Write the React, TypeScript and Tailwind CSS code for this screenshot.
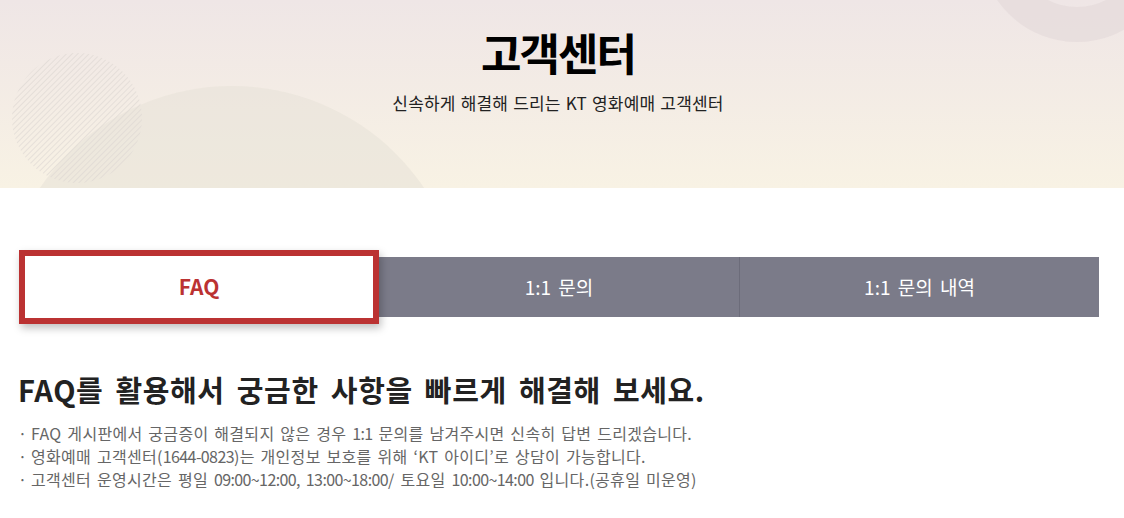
import React from "react";

const FONT = { fontFamily: '"Noto Sans CJK KR", "Noto Sans", sans-serif' };

type Tab = { label: string; active?: boolean };

const tabs: Tab[] = [
  { label: "FAQ", active: true },
  { label: "1:1 문의" },
  { label: "1:1 문의 내역" },
];

const notices = [
  "FAQ 게시판에서 궁금증이 해결되지 않은 경우 1:1 문의를 남겨주시면 신속히 답변 드리겠습니다.",
  "영화예매 고객센터(1644-0823)는 개인정보 보호를 위해 ‘KT 아이디’로 상담이 가능합니다.",
  "고객센터 운영시간은 평일 09:00~12:00, 13:00~18:00/ 토요일 10:00~14:00 입니다.(공휴일 미운영)",
];

// digits in the original face run narrower than in Noto, so tighten them
function NoticeText({ text }: { text: string }) {
  const parts = text.split(/([0-9][0-9:~,\-]*)/);
  return (
    <span>
      {parts.map((p, i) =>
        /^[0-9]/.test(p) ? (
          <span key={i} className="tracking-[-0.6px]">
            {p}
          </span>
        ) : (
          <React.Fragment key={i}>{p}</React.Fragment>
        )
      )}
    </span>
  );
}

function HatchCircle() {
  return (
    <svg width="132" height="132" viewBox="0 0 132 132" className="absolute left-[11px] top-[52px]">
      <defs>
        <pattern id="hatch" width="4" height="4" patternUnits="userSpaceOnUse" patternTransform="rotate(45)">
          <line x1="0" y1="0" x2="0" y2="4" stroke="#ddd7d2" strokeWidth="1.3" />
        </pattern>
        <clipPath id="hc">
          <circle cx="66" cy="66" r="65" />
        </clipPath>
      </defs>
      <rect width="132" height="132" fill="url(#hatch)" clipPath="url(#hc)" />
    </svg>
  );
}

function PageHeader() {
  return (
    <header className="relative h-[188px] overflow-hidden bg-gradient-to-b from-[#efe6e6] to-[#f8f2e4]">
      <div className="absolute left-[0px] top-[86px] h-[464px] w-[464px] rounded-full bg-[#e8e2d9]/60" />
      <HatchCircle />
      <div className="absolute left-[980px] top-[-152px] h-[194px] w-[194px] rounded-full border-[35px] border-[#e6dcdc]/80" />
      <div className="relative flex flex-col items-center pt-[24px] pr-[8px]">
        <h1 className="text-[44px] font-bold leading-[56px] tracking-[-2px] text-black">고객센터</h1>
        <p className="mt-[12px] text-[17px] leading-[22px] tracking-[0.2px] text-[#222] [word-spacing:1px]">
          신속하게 해결해 드리는 KT 영화예매 고객센터
        </p>
      </div>
    </header>
  );
}

export default function App() {
  return (
    <div className="min-h-[518px] bg-white" style={FONT}>
      <PageHeader />
      <main className="pl-[20px] pr-[25px]">
        <nav className="mt-[69px] flex h-[60px] items-center bg-[#7b7b89]">
          {tabs.map((tab, i) =>
            tab.active ? (
              <div
                key={tab.label}
                className="relative z-10 -ml-px flex h-[74px] w-[360px] shrink-0 items-center justify-center border-[6px] border-[#bb3232] bg-white text-[21px] font-bold text-[#bb3232] shadow-[2px_4px_8px_rgba(0,0,0,0.25)]"
              >
                {tab.label}
              </div>
            ) : (
              <div
                key={tab.label}
                className={
                  i === 2
                    ? "flex h-full flex-1 items-center justify-center border-l border-[#6c6c7a] text-[19px] text-white [word-spacing:3px]"
                    : "flex h-full w-[360px] items-center justify-center text-[19px] text-white [word-spacing:3px]"
                }
              >
                {tab.label}
              </div>
            )
          )}
        </nav>

        <section className="mt-[54px]">
          <h2 className="-ml-[2px] text-[29px] font-bold leading-[36px] tracking-[0.6px] text-[#222] [word-spacing:5px]">
            FAQ를 활용해서 궁금한 사항을 빠르게 해결해 보세요.
          </h2>
          <ul className="-ml-[2px] mt-[15px] text-[16px] leading-[23px] tracking-[0.3px] text-[#666] [word-spacing:2px]">
            {notices.map((n) => (
              <li key={n} className="flex">
                <span className="w-[13px] shrink-0">·</span>
                <NoticeText text={n} />
              </li>
            ))}
          </ul>
        </section>
      </main>
    </div>
  );
}
